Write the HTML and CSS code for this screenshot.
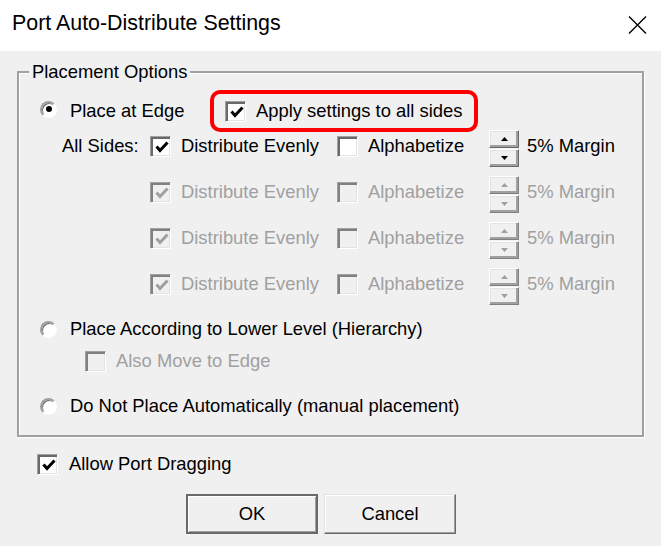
FILE: index.html
```html
<!DOCTYPE html>
<html lang="en">
<head>
    <meta charset="UTF-8">
    <title>Port Auto-Distribute Settings</title>
    <link rel="stylesheet" href="styles.css">
</head>
<body>
    <div class="dialog">
        <div class="titlebar">
            <span class="title">Port Auto-Distribute Settings</span>
            <svg class="close" width="19" height="18" viewBox="0 0 19 18">
                <path d="M1 0.5 L18 17.5 M18 0.5 L1 17.5" stroke="#000" stroke-width="1.4" fill="none"/>
            </svg>
        </div>

        <div class="content">
            <fieldset class="group">
                <legend>Placement Options</legend>

                <div class="row row-edge">
                    <label class="option edge-option">
                        <span class="radio checked"></span>Place at Edge
                    </label>
                    <div class="highlight">
                        <label class="option">
                            <span class="check"><svg width="14" height="12" viewBox="0 0 14 12"><path d="M1.5 5.5 L5 9.5 L12.5 1.5" fill="none" stroke="currentColor" stroke-width="3"/></svg></span>Apply settings to all sides
                        </label>
                    </div>
                </div>

                <div class="sides">
                    <div class="side-row">
                        <span class="side-label">All Sides:</span>
                        <label class="option cell-dist">
                            <span class="check"><svg width="14" height="12" viewBox="0 0 14 12"><path d="M1.5 5.5 L5 9.5 L12.5 1.5" fill="none" stroke="currentColor" stroke-width="3"/></svg></span>Distribute Evenly
                        </label>
                        <label class="option cell-alpha">
                            <span class="check"></span>Alphabetize
                        </label>
                        <span class="spinner">
                            <span class="spin-btn"><svg width="7" height="4" viewBox="0 0 7 4"><path d="M0 4 L3.5 0 L7 4 Z" fill="currentColor"/></svg></span>
                            <span class="spin-btn"><svg width="7" height="4" viewBox="0 0 7 4"><path d="M0 0 L3.5 4 L7 0 Z" fill="currentColor"/></svg></span>
                        </span>
                        <span class="margin-text">5% Margin</span>
                    </div>

                    <div class="side-row disabled">
                        <span class="side-label"></span>
                        <label class="option cell-dist">
                            <span class="check"><svg width="14" height="12" viewBox="0 0 14 12"><path d="M1.5 5.5 L5 9.5 L12.5 1.5" fill="none" stroke="currentColor" stroke-width="3"/></svg></span>Distribute Evenly
                        </label>
                        <label class="option cell-alpha">
                            <span class="check"></span>Alphabetize
                        </label>
                        <span class="spinner">
                            <span class="spin-btn"><svg width="7" height="4" viewBox="0 0 7 4"><path d="M0 4 L3.5 0 L7 4 Z" fill="currentColor"/></svg></span>
                            <span class="spin-btn"><svg width="7" height="4" viewBox="0 0 7 4"><path d="M0 0 L3.5 4 L7 0 Z" fill="currentColor"/></svg></span>
                        </span>
                        <span class="margin-text">5% Margin</span>
                    </div>

                    <div class="side-row disabled">
                        <span class="side-label"></span>
                        <label class="option cell-dist">
                            <span class="check"><svg width="14" height="12" viewBox="0 0 14 12"><path d="M1.5 5.5 L5 9.5 L12.5 1.5" fill="none" stroke="currentColor" stroke-width="3"/></svg></span>Distribute Evenly
                        </label>
                        <label class="option cell-alpha">
                            <span class="check"></span>Alphabetize
                        </label>
                        <span class="spinner">
                            <span class="spin-btn"><svg width="7" height="4" viewBox="0 0 7 4"><path d="M0 4 L3.5 0 L7 4 Z" fill="currentColor"/></svg></span>
                            <span class="spin-btn"><svg width="7" height="4" viewBox="0 0 7 4"><path d="M0 0 L3.5 4 L7 0 Z" fill="currentColor"/></svg></span>
                        </span>
                        <span class="margin-text">5% Margin</span>
                    </div>

                    <div class="side-row disabled">
                        <span class="side-label"></span>
                        <label class="option cell-dist">
                            <span class="check"><svg width="14" height="12" viewBox="0 0 14 12"><path d="M1.5 5.5 L5 9.5 L12.5 1.5" fill="none" stroke="currentColor" stroke-width="3"/></svg></span>Distribute Evenly
                        </label>
                        <label class="option cell-alpha">
                            <span class="check"></span>Alphabetize
                        </label>
                        <span class="spinner">
                            <span class="spin-btn"><svg width="7" height="4" viewBox="0 0 7 4"><path d="M0 4 L3.5 0 L7 4 Z" fill="currentColor"/></svg></span>
                            <span class="spin-btn"><svg width="7" height="4" viewBox="0 0 7 4"><path d="M0 0 L3.5 4 L7 0 Z" fill="currentColor"/></svg></span>
                        </span>
                        <span class="margin-text">5% Margin</span>
                    </div>
                </div>

                <div class="row row-hier">
                    <label class="option">
                        <span class="radio"></span>Place According to Lower Level (Hierarchy)
                    </label>
                </div>

                <div class="row row-also disabled">
                    <label class="option">
                        <span class="check"></span>Also Move to Edge
                    </label>
                </div>

                <div class="row row-manual">
                    <label class="option">
                        <span class="radio"></span>Do Not Place Automatically (manual placement)
                    </label>
                </div>
            </fieldset>

            <div class="row row-drag">
                <label class="option">
                    <span class="check"><svg width="14" height="12" viewBox="0 0 14 12"><path d="M1.5 5.5 L5 9.5 L12.5 1.5" fill="none" stroke="currentColor" stroke-width="3"/></svg></span>Allow Port Dragging
                </label>
            </div>

            <div class="buttons">
                <button class="btn btn-default">OK</button>
                <button class="btn">Cancel</button>
            </div>
        </div>
    </div>
</body>
</html>
```

FILE: styles.css
```css
* {
    margin: 0;
    padding: 0;
    box-sizing: border-box;
}

body {
    font-family: "Liberation Sans", Arial, sans-serif;
    font-size: 18.4px;
    color: #000;
    background: #f0f0f0;
}

.dialog {
    width: 661px;
    height: 546px;
    overflow: hidden;
}

/* title bar */
.titlebar {
    height: 51px;
    background: #fff;
    display: flex;
    align-items: center;
    justify-content: space-between;
    padding: 0 14px 4px 12px;
}

.title {
    font-size: 21.4px;
}

.close {
    display: block;
    margin-top: 2px;
}

/* dialog body */
.content {
    padding: 11px 17px 0;
}

.group {
    border: 2px solid #a0a0a0;
    box-shadow: inset 1px 1px 0 #fff, 1px 1px 0 #fff;
    padding: 8px 0 0;
    height: 375px;
}

.group legend {
    margin-left: 10px;
    padding: 0 3px;
    line-height: 20px;
    background: #f0f0f0;
}

.row {
    display: flex;
    align-items: center;
    height: 28px;
    padding-left: 21px;
}

.option {
    display: flex;
    align-items: center;
    white-space: nowrap;
}

.disabled {
    color: #a0a0a0;
}

/* radio buttons */
.radio {
    width: 17px;
    height: 17px;
    border-radius: 50%;
    background: #fff;
    border: 2px solid;
    border-color: #a0a0a0 #fff #fff #a0a0a0;
    box-shadow: inset 1px 1px 0 #696969, 0 0 0 1px #f0f0f0;
    margin-right: 13px;
    display: flex;
    align-items: center;
    justify-content: center;
    flex-shrink: 0;
}

.radio.checked::after {
    content: "";
    width: 6px;
    height: 6px;
    border-radius: 50%;
    background: #000;
}

/* checkboxes */
.check {
    width: 21px;
    height: 21px;
    background: #fff;
    border: 1px solid;
    border-color: #a0a0a0 #fff #fff #a0a0a0;
    box-shadow: inset 2px 2px 0 #696969, inset -1px -1px 0 #e3e3e3;
    color: #000;
    margin-right: 10px;
    display: flex;
    align-items: center;
    justify-content: center;
    padding: 2px 0 0 2px;
    flex-shrink: 0;
}

.check svg {
    display: block;
}

.disabled .check {
    background: #f0f0f0;
    box-shadow: inset 2px 2px 0 #808080, inset -1px -1px 0 #e3e3e3;
    color: #a0a0a0;
}

/* first row */
.row-edge {
    height: 42px;
}

.edge-option {
    width: 170px;
}

.edge-option .radio {
    margin-bottom: 4px;
}

.highlight {
    width: 268px;
    height: 42px;
    border: 4px solid #f00;
    border-radius: 10px;
    display: flex;
    align-items: center;
    padding-left: 11px;
}

/* per-side rows */
.sides {
    display: flex;
    flex-direction: column;
    gap: 18px;
}

.side-row {
    display: flex;
    align-items: center;
    height: 28px;
    padding-left: 43px;
}

.side-label {
    width: 88px;
}

.cell-dist {
    width: 187px;
}

.cell-alpha {
    width: 152px;
}

.spinner {
    display: flex;
    flex-direction: column;
    gap: 1px;
    margin-top: 5px;
    margin-right: 8px;
}

.spin-btn {
    width: 30px;
    height: 18px;
    background: #f0f0f0;
    border: 1px solid;
    border-color: #fff #696969 #696969 #fff;
    box-shadow: inset -2px -2px 0 #a0a0a0, inset 1px 1px 0 #e3e3e3;
    display: flex;
    align-items: center;
    justify-content: center;
    color: #000;
}

.disabled .spin-btn {
    color: #a0a0a0;
    border-color: #fff #808080 #808080 #fff;
}

.spin-btn svg {
    display: block;
}

/* lower options */
.row-hier {
    margin-top: 17px;
}

.row-also {
    margin-top: 4px;
    padding-left: 66px;
}

.row-manual {
    margin-top: 17px;
}

.row-drag {
    margin-top: 13px;
    padding-left: 20px;
}

.row-drag .check {
    margin-right: 11px;
}

/* buttons */
.buttons {
    display: flex;
    gap: 6px;
    margin-top: 16px;
    padding-left: 169px;
}

.btn {
    width: 132px;
    height: 40px;
    font-family: inherit;
    font-size: 18.4px;
    color: #000;
    background: #f0f0f0;
    border: 1px solid;
    border-color: #e3e3e3 #696969 #696969 #e3e3e3;
    box-shadow: inset -1px -1px 0 #a0a0a0, inset 1px 1px 0 #fff;
}

.btn-default {
    border: 2px solid #696969;
    box-shadow: inset 1px 1px 0 #fff, inset -1px -1px 0 #a0a0a0;
}
```
